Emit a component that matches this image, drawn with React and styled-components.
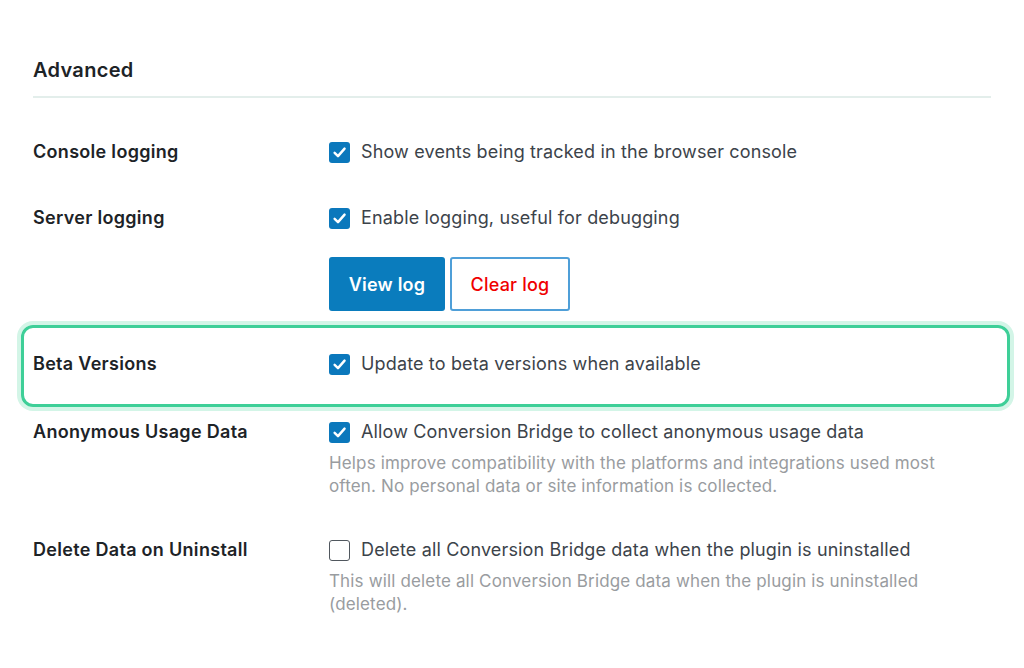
import React from "react";
import styled, { createGlobalStyle } from "styled-components";

const Global = createGlobalStyle`
  html, body { margin: 0; padding: 0; background: #ffffff; }
  body { font-family: Inter, "Noto Sans", "Liberation Sans", sans-serif; -webkit-font-smoothing: antialiased; }
  * { box-sizing: border-box; }
`;

const Page = styled.div`
  width: 1024px;
  height: 668px;
  padding: 56px 33px 0 33px;
  background: #fff;
  overflow: hidden;
`;

const Section = styled.div`
  width: 958px;
`;

const Heading = styled.h2`
  margin: 0;
  font-size: 20px;
  line-height: 28px;
  font-weight: 600;
  letter-spacing: 0.3px;
  color: #1d2327;
  padding-bottom: 12px;
  border-bottom: 2px solid #e3eeeb;
`;

const Row = styled.div`
  display: grid;
  grid-template-columns: 296px 1fr;
  align-items: start;
  margin-top: ${(p) => p.$space}px;
`;

const Highlight = styled.div`
  margin: ${(p) => p.$space}px -19px 0 -12px;
  padding: 24px 0 28px 9px;
  border: 3px solid #3ecf98;
  border-radius: 12px;
  box-shadow: 0 0 0 4px #d3f5e7;
`;

const Label = styled.div`
  font-size: 18px;
  line-height: 24px;
  font-weight: 600;
  letter-spacing: 0.3px;
  color: #1d2327;
`;

const Control = styled.div`
  display: flex;
  flex-direction: column;
`;

const CheckLine = styled.label`
  display: flex;
  align-items: center;
  gap: 11px;
  font-size: 18px;
  line-height: 24px;
  letter-spacing: 0.15px;
  color: #3c434a;
`;

const Box = styled.span`
  width: 21px;
  height: 21px;
  flex: none;
  border-radius: 3px;
  display: inline-flex;
  align-items: center;
  justify-content: center;
  background: ${(p) => (p.$checked ? "#0b78bc" : "#fff")};
  border: ${(p) => (p.$checked ? "none" : "1.5px solid #50575e")};
  margin-top: 1px;
`;

const Desc = styled.p`
  margin: 8px 0 0 0;
  max-width: 630px;
  font-size: 17px;
  line-height: 23px;
  letter-spacing: 0.15px;
  color: #999ca0;
`;

const Buttons = styled.div`
  display: flex;
  gap: 5px;
  margin-top: 27px;
`;

const Button = styled.button`
  height: 54px;
  width: ${(p) => (p.$primary ? 116 : 120)}px;
  padding: 0;
  border-radius: 3px;
  font-family: inherit;
  font-size: 18px;
  letter-spacing: 0.2px;
  font-weight: ${(p) => (p.$primary ? 600 : 500)};
  cursor: pointer;
  background: ${(p) => (p.$primary ? "#0a7cbd" : "#fff")};
  color: ${(p) => (p.$primary ? "#fff" : "#f00000")};
  border: ${(p) => (p.$primary ? "none" : "2px solid #4f9fd8")};
`;

function Check({ checked }) {
  return (
    <Box $checked={checked}>
      {checked && (
        <svg width="15" height="15" viewBox="0 0 16 16" fill="none">
          <path d="M2.8 8.4 L6.4 11.9 L13.4 3.9" stroke="#fff" strokeWidth="2.6" strokeLinecap="round" strokeLinejoin="round" />
        </svg>
      )}
    </Box>
  );
}

function Field({ label, checked, text, desc, children }) {
  return (
    <>
      <Label>{label}</Label>
      <Control>
        <CheckLine>
          <Check checked={checked} />
          {text}
        </CheckLine>
        {desc && <Desc>{desc}</Desc>}
        {children}
      </Control>
    </>
  );
}

export default function App() {
  return (
    <>
      <Global />
      <Page>
        <Section>
          <Heading>Advanced</Heading>
          <Row $space={42}>
            <Field label="Console logging" checked text="Show events being tracked in the browser console" />
          </Row>
          <Row $space={42}>
            <Field label="Server logging" checked text="Enable logging, useful for debugging">
              <Buttons>
                <Button $primary>View log</Button>
                <Button>Clear log</Button>
              </Buttons>
            </Field>
          </Row>
          <Highlight $space={14}>
            <Row $space={0}>
              <Field label="Beta Versions" checked text="Update to beta versions when available" />
            </Row>
          </Highlight>
          <Row $space={13}>
            <Field
              label="Anonymous Usage Data"
              checked
              text="Allow Conversion Bridge to collect anonymous usage data"
              desc="Helps improve compatibility with the platforms and integrations used most often. No personal data or site information is collected."
            />
          </Row>
          <Row $space={40}>
            <Field
              label="Delete Data on Uninstall"
              checked={false}
              text="Delete all Conversion Bridge data when the plugin is uninstalled"
              desc="This will delete all Conversion Bridge data when the plugin is uninstalled (deleted)."
            />
          </Row>
        </Section>
      </Page>
    </>
  );
}
